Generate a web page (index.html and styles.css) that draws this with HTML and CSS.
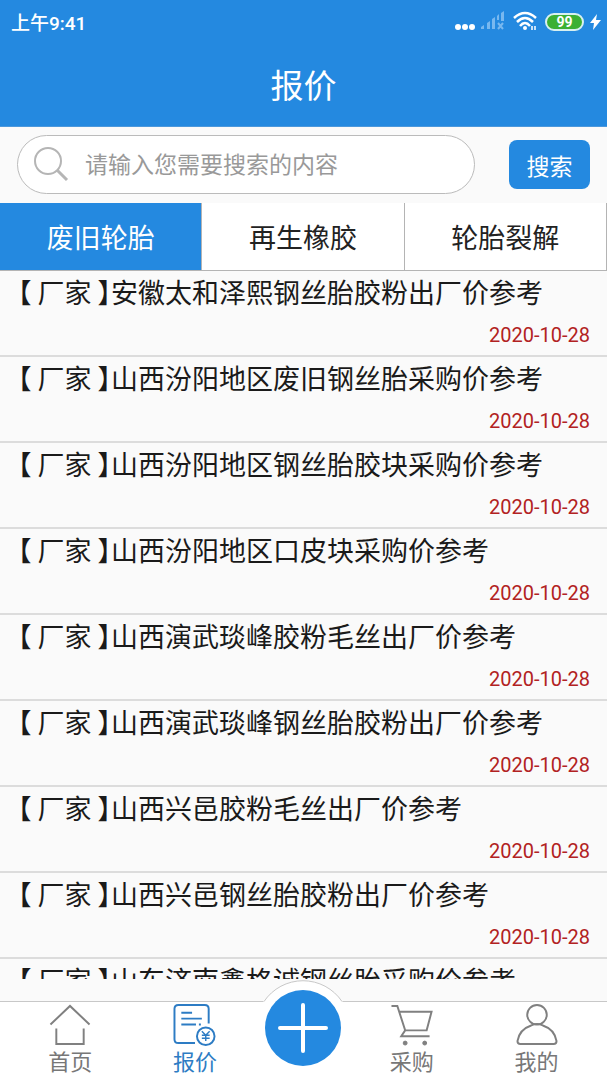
FILE: index.html
```html
<!DOCTYPE html>
<html lang="zh-CN">
<head>
  <meta charset="UTF-8" />
  <meta name="viewport" content="width=device-width, initial-scale=1.0"/>
  <title>报价</title>
  <link rel="stylesheet" href="styles.css">
</head>
<body>
  <header>
    <div class="status-bar">
      <span class="time">上午9:41</span>
      <div class="status-icons">
        <svg class="dots" width="22" height="24" viewBox="0 0 22 24" fill="#fff">
          <circle cx="3" cy="17" r="3"/><circle cx="10" cy="17" r="3"/><circle cx="17" cy="17" r="3"/>
        </svg>
        <svg class="signal" width="24" height="24" viewBox="0 0 24 24" fill="#79b8ef">
          <path d="M0 19v-2l3-2v4zM6 19v-6l3-2v8zM11 19V9l3-2v12zM16 10V6l2-2v6zM20 11V3l3-2v10z"/>
          <path d="M17 13l5 6M22 13l-5 6" stroke="#79b8ef" stroke-width="2"/>
        </svg>
        <svg class="wifi" width="26" height="24" viewBox="0 0 26 24" fill="none" stroke="#fff" stroke-width="2.500">
          <path d="M1 8Q12 -2 23 8M4 12Q12 4 20 12M7 16Q12 10 17 16"/>
          <circle cx="12" cy="18" r="2" fill="#fff" stroke="none"/>
          <path d="M19 16v4M22 16v4" stroke-width="1.500"/>
        </svg>
        <span class="battery">99</span>
        <svg class="bolt" width="11" height="24" viewBox="0 0 11 24" fill="#fff">
          <path d="M7 4L0 13h4L3 20L11 10H6z"/>
        </svg>
      </div>
    </div>
    <h1>报价</h1>
  </header>

  <form class="search" onsubmit="return false">
    <div class="search-box">
      <svg width="36" height="36" viewBox="0 0 36 36" fill="none" stroke="#b5b5b5">
        <circle cx="14" cy="14" r="13" stroke-width="2"/>
        <path d="M23 23l10 10" stroke-width="3"/>
      </svg>
      <input type="text" placeholder="请输入您需要搜索的内容" aria-label="搜索内容">
    </div>
    <button class="search-btn">搜索</button>
  </form>

  <div class="tabs">
    <button class="tab active">废旧轮胎</button>
    <button class="tab">再生橡胶</button>
    <button class="tab">轮胎裂解</button>
  </div>

  <ul class="list" id="list"></ul>

  <nav>
    <a href="#" class="nav-item">
      <svg width="44" height="44" viewBox="0 0 44 44" fill="none" stroke="#808080" stroke-width="2">
        <path d="M2 22L22 3L42 22M8 26V42H36V26"/>
      </svg>
      首页
    </a>
    <a href="#" class="nav-item active">
      <svg width="44" height="44" viewBox="0 0 44 44" fill="none" stroke="#2d7cc4" stroke-width="2">
        <path d="M22 41H5Q1 41 1 37V6Q1 2 5 2H32Q36 2 36 6V21M8 10H19M8 16H29M8 22H23M26 22H28"/>
        <circle cx="33" cy="34" r="9"/>
        <path d="M29 29L33 33L37 29M33 33V39M29 33H37M29 36H37" stroke-width="1.500"/>
      </svg>
      报价
    </a>
    <div class="nav-add">
      <svg class="bump" width="80" height="23" viewBox="0 0 80 23">
        <path d="M0 23V21.500H1A47 47 0 0 1 79 21.500H80V23Z" fill="#fff"/>
        <path d="M1 21.500A47 47 0 0 1 79 21.500" fill="none" stroke="#c8c8c8"/>
      </svg>
      <button class="add-btn" aria-label="发布">
        <svg width="50" height="50" viewBox="0 0 50 50" stroke="#fff" stroke-width="4" stroke-linecap="round">
          <path d="M2 25H48M25 2V48"/>
        </svg>
      </button>
    </div>
    <a href="#" class="nav-item">
      <svg width="44" height="44" viewBox="0 0 44 44" fill="none" stroke="#808080" stroke-width="2">
        <path d="M1 3H7L15 28H37L42 9H9M15 28L11 34H40"/>
        <circle cx="15" cy="41" r="2" fill="#808080" stroke-width="1"/>
        <circle cx="35" cy="41" r="2" fill="#808080" stroke-width="1"/>
      </svg>
      采购
    </a>
    <a href="#" class="nav-item">
      <svg width="44" height="44" viewBox="0 0 44 44" fill="none" stroke="#808080" stroke-width="2">
        <circle cx="22" cy="12" r="10"/>
        <path d="M16 23Q4 27 2 39Q2 42 5 42H39Q42 42 42 39Q40 27 28 23Q22 20 16 23Z"/>
      </svg>
      我的
    </a>
  </nav>

  <script>
    const quotes = [
      "安徽太和泽熙钢丝胎胶粉出厂价参考",
      "山西汾阳地区废旧钢丝胎采购价参考",
      "山西汾阳地区钢丝胎胶块采购价参考",
      "山西汾阳地区口皮块采购价参考",
      "山西演武琰峰胶粉毛丝出厂价参考",
      "山西演武琰峰钢丝胎胶粉出厂价参考",
      "山西兴邑胶粉毛丝出厂价参考",
      "山西兴邑钢丝胎胶粉出厂价参考",
      "山东济南鑫格诚钢丝胎采购价参考"
    ];

    document.getElementById("list").innerHTML = quotes.map(title => `
      <li>
        <a href="#"><span class="tag"><span>【</span>厂家<span>】</span></span>${title}</a>
        <time>2020-10-28</time>
      </li>`).join("");
  </script>
</body>
</html>
```

FILE: styles.css
```css
* {
  box-sizing: border-box;
}
body {
  font-family: Roboto, "Noto Sans CJK SC", sans-serif;
  margin: 0;
  height: 100vh;
  display: flex;
  flex-direction: column;
  background: #fafafa;
  color: #222;
  overflow: hidden;
}
button, input {
  font-family: inherit;
  border: none;
  padding: 0;
}
header {
  height: 127px;
  background: #2489e0;
  border-bottom: 1px solid #4c98dc;
  color: #fff;
}
.status-bar {
  height: 43px;
  padding: 0 6px 0 11px;
  display: flex;
  align-items: center;
  justify-content: space-between;
}
.time {
  font-size: 19px;
  font-weight: 500;
}
.status-icons {
  display: flex;
  align-items: center;
}
.signal {
  margin-left: 4px;
}
.wifi {
  margin-left: 8px;
}
.battery {
  width: 39px;
  height: 18px;
  margin: 0 6px;
  border: 2px solid #d8f0f0;
  border-radius: 9px;
  background: #3cb034;
  font-size: 14px;
  font-weight: 700;
  line-height: 14px;
  text-align: center;
}
h1 {
  margin: 0;
  font-size: 33px;
  font-weight: 400;
  line-height: 88px;
  text-align: center;
}
.search {
  display: flex;
  align-items: center;
  gap: 34px;
  padding: 8px 17px 9px;
}
.search-box {
  flex: 1;
  height: 59px;
  display: flex;
  align-items: center;
  gap: 15px;
  padding: 0 16px;
  border: 1px solid #bbb;
  border-radius: 30px;
  background: #fff;
}
.search-box svg {
  flex: none;
}
.search-box input {
  flex: 1;
  min-width: 0;
  height: 42px;
  padding-top: 2px;
  font-size: 23px;
  background: none;
  outline: none;
}
.search-box input::placeholder {
  color: #999;
}
.search-btn {
  width: 81px;
  height: 49px;
  border-radius: 8px;
  background: #2489e0;
  color: #fff;
  font-size: 23px;
}
.tabs {
  display: flex;
  border-bottom: 1px solid #b4b4b4;
}
.tab {
  flex: 1;
  height: 67px;
  background: #fff;
  color: #222;
  font-size: 27px;
  border-right: 1px solid #b4b4b4;
}
.tab.active {
  background: #2489e0;
  color: #fff;
}
.list {
  flex: 1;
  min-height: 0;
  margin: 0 0 22px;
  padding: 0;
  list-style: none;
  overflow: hidden;
}
.list li {
  height: 86px;
  padding: 3px 17px 0 18px;
  border-bottom: 2px solid #dcdcdc;
}
.list a {
  display: block;
  color: #1a1a1a;
  font-size: 27px;
  line-height: 40px;
  text-decoration: none;
  white-space: nowrap;
}
.tag {
  display: inline-flex;
  gap: 6px;
  font-feature-settings: "halt";
}
.list time {
  display: block;
  color: #b22222;
  font-size: 20px;
  line-height: 42px;
  text-align: right;
}
nav {
  height: 79px;
  display: flex;
  padding: 0 8px;
  background: #fff;
  border-top: 1px solid #c8c8c8;
}
.nav-item {
  flex: 1;
  display: flex;
  flex-direction: column;
  align-items: center;
  padding-top: 1px;
  color: #777;
  font-size: 22px;
  line-height: 34px;
  text-decoration: none;
}
.nav-item.active {
  color: #2d7cc4;
}
.nav-add {
  position: relative;
  width: 92px;
}
.bump {
  position: absolute;
  left: 5px;
  top: -22px;
}
.add-btn {
  position: absolute;
  left: 7px;
  top: -12px;
  width: 76px;
  height: 76px;
  display: flex;
  align-items: center;
  justify-content: center;
  border-radius: 50%;
  background: #2489e0;
}
```
